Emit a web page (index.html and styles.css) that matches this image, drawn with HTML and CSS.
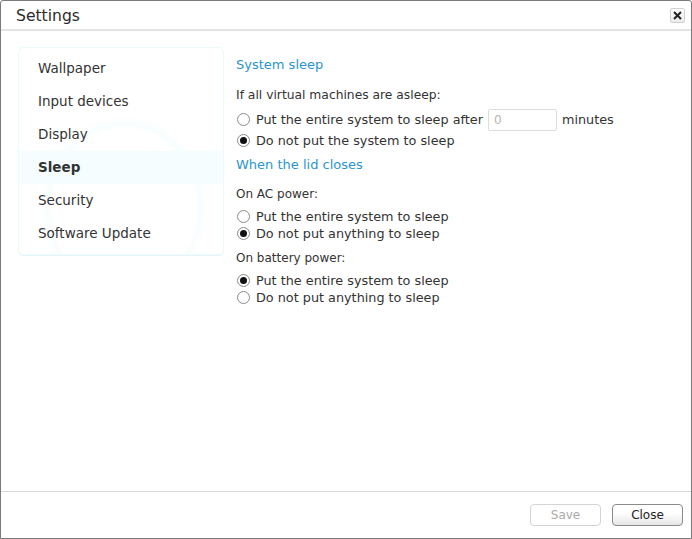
FILE: index.html
```html
<!DOCTYPE html>
<html>
<head>
<meta charset="utf-8">
<link rel="stylesheet" href="styles.css">
</head>
<body>
<div class="window">
  <div class="titlebar">
    <span class="title">Settings</span>
    <button class="xbtn" aria-label="close"><svg width="9" height="9" viewBox="0 0 9 9"><path d="M1 1L8 8M8 1L1 8" stroke="#222" stroke-width="2"/></svg></button>
  </div>
  <div class="body">
    <div class="sidebar">
      <div class="navitem">Wallpaper</div>
      <div class="navitem">Input devices</div>
      <div class="navitem">Display</div>
      <div class="navitem active">Sleep</div>
      <div class="navitem">Security</div>
      <div class="navitem">Software Update</div>
    </div>
    <div class="content">
      <div class="heading first">System sleep</div>
      <div class="label">If all virtual machines are asleep:</div>
      <div class="radio row1"><span class="dot"></span>Put the entire system to sleep after <span class="num">0</span> minutes</div>
      <div class="radio row2"><span class="dot on"></span>Do not put the system to sleep</div>
      <div class="heading second">When the lid closes</div>
      <div class="sub ac">On AC power:</div>
      <div class="radio"><span class="dot"></span>Put the entire system to sleep</div>
      <div class="radio"><span class="dot on"></span>Do not put anything to sleep</div>
      <div class="sub bat">On battery power:</div>
      <div class="radio"><span class="dot on"></span>Put the entire system to sleep</div>
      <div class="radio"><span class="dot"></span>Do not put anything to sleep</div>
    </div>
  </div>
  <div class="footer">
    <button class="btn disabled">Save</button>
    <button class="btn">Close</button>
  </div>
</div>
</body>
</html>
```
FILE: styles.css
```css
* { box-sizing: border-box; }
html, body { margin: 0; padding: 0; background: #fff; }
body { font-family: "DejaVu Sans", sans-serif; color: #333; }
.window {
  width: 692px; height: 539px;
  border: 1px solid #7a7a7a;
  border-radius: 3px 3px 0 0;
  display: flex; flex-direction: column;
  background: #fff;
}
.titlebar {
  height: 30px;
  border-bottom: 2px solid #e4e4e4;
  display: flex; align-items: center; justify-content: space-between;
  padding: 0 6px 0 15px;
}
.title { font-size: 15.6px; color: #2b2b2b; margin-top: 1px; }
.xbtn {
  width: 15px; height: 15px; padding: 0; margin: 0;
  border: 1px solid #d0d0d0; border-radius: 2px;
  background: linear-gradient(#fff, #ececec);
  display: flex; align-items: center; justify-content: center;
}
.body { flex: 1; display: flex; align-items: flex-start; padding: 16px 0 0 17px; }
.sidebar {
  width: 206px;
  border: 1px solid #eef9fb;
  border-radius: 5px;
  padding: 4px 0 4px 0;
  box-shadow: 0 1px 1px #e2f6fa;
  background: radial-gradient(ellipse 100px 110px at 105px 160px, transparent 72%, #f8fdfe 76%, transparent 84%);
}
.navitem {
  height: 33px; line-height: 33px;
  padding-left: 19px;
  font-size: 13.5px; color: #333;
}
.navitem.active { font-weight: bold; background: #f5fdff; }
.content { padding-left: 12px; padding-top: 8px; font-size: 12.8px; }
.heading { color: #2a95d0; font-size: 13px; line-height: 18px; }
.heading.first { margin-top: 1px; }
.label { margin-top: 13px; line-height: 16px; font-size: 12.3px; }
.sub { font-size: 12px; line-height: 16px; margin-bottom: 6px; }
.sub.ac { margin-top: 12px; }
.sub.bat { margin-top: 8px; }
.heading.second { margin-top: 7px; }
.radio { display: flex; align-items: center; height: 17px; line-height: 17px; white-space: nowrap; }
.radio.row1 { height: 21px; margin-top: 6px; }
.radio.row2 { margin-top: 2px; }
.dot {
  width: 13px; height: 13px; border-radius: 50%;
  border: 1px solid #8a8a8a; background: #fff;
  margin-left: 1px; margin-right: 6px; flex: none; position: relative;
}
.dot.on::after {
  content: ""; position: absolute; left: 2px; top: 2px;
  width: 7px; height: 7px; border-radius: 50%; background: #111;
}
.num {
  display: inline-block; width: 69px; height: 22px; line-height: 20px;
  border: 1px solid #dcdcdc; border-radius: 2px;
  color: #b5b5b5; font-size: 12px; padding-left: 5px;
  margin: 0 5px;
}
.footer {
  height: 47px; border-top: 1px solid #dadada;
  display: flex; justify-content: flex-end; align-items: center;
  padding-right: 8px; gap: 11px;
}
.btn {
  width: 71px; height: 22px;
  font-family: "DejaVu Sans", sans-serif; font-size: 12px;
  border-radius: 4px; border: 1px solid #8a8a8a;
  background: linear-gradient(#fff 40%, #e6e6e6);
  color: #222; padding: 0;
}
.btn.disabled { color: #aaa; border-color: #d4d4d4; background: #fff; }
```
